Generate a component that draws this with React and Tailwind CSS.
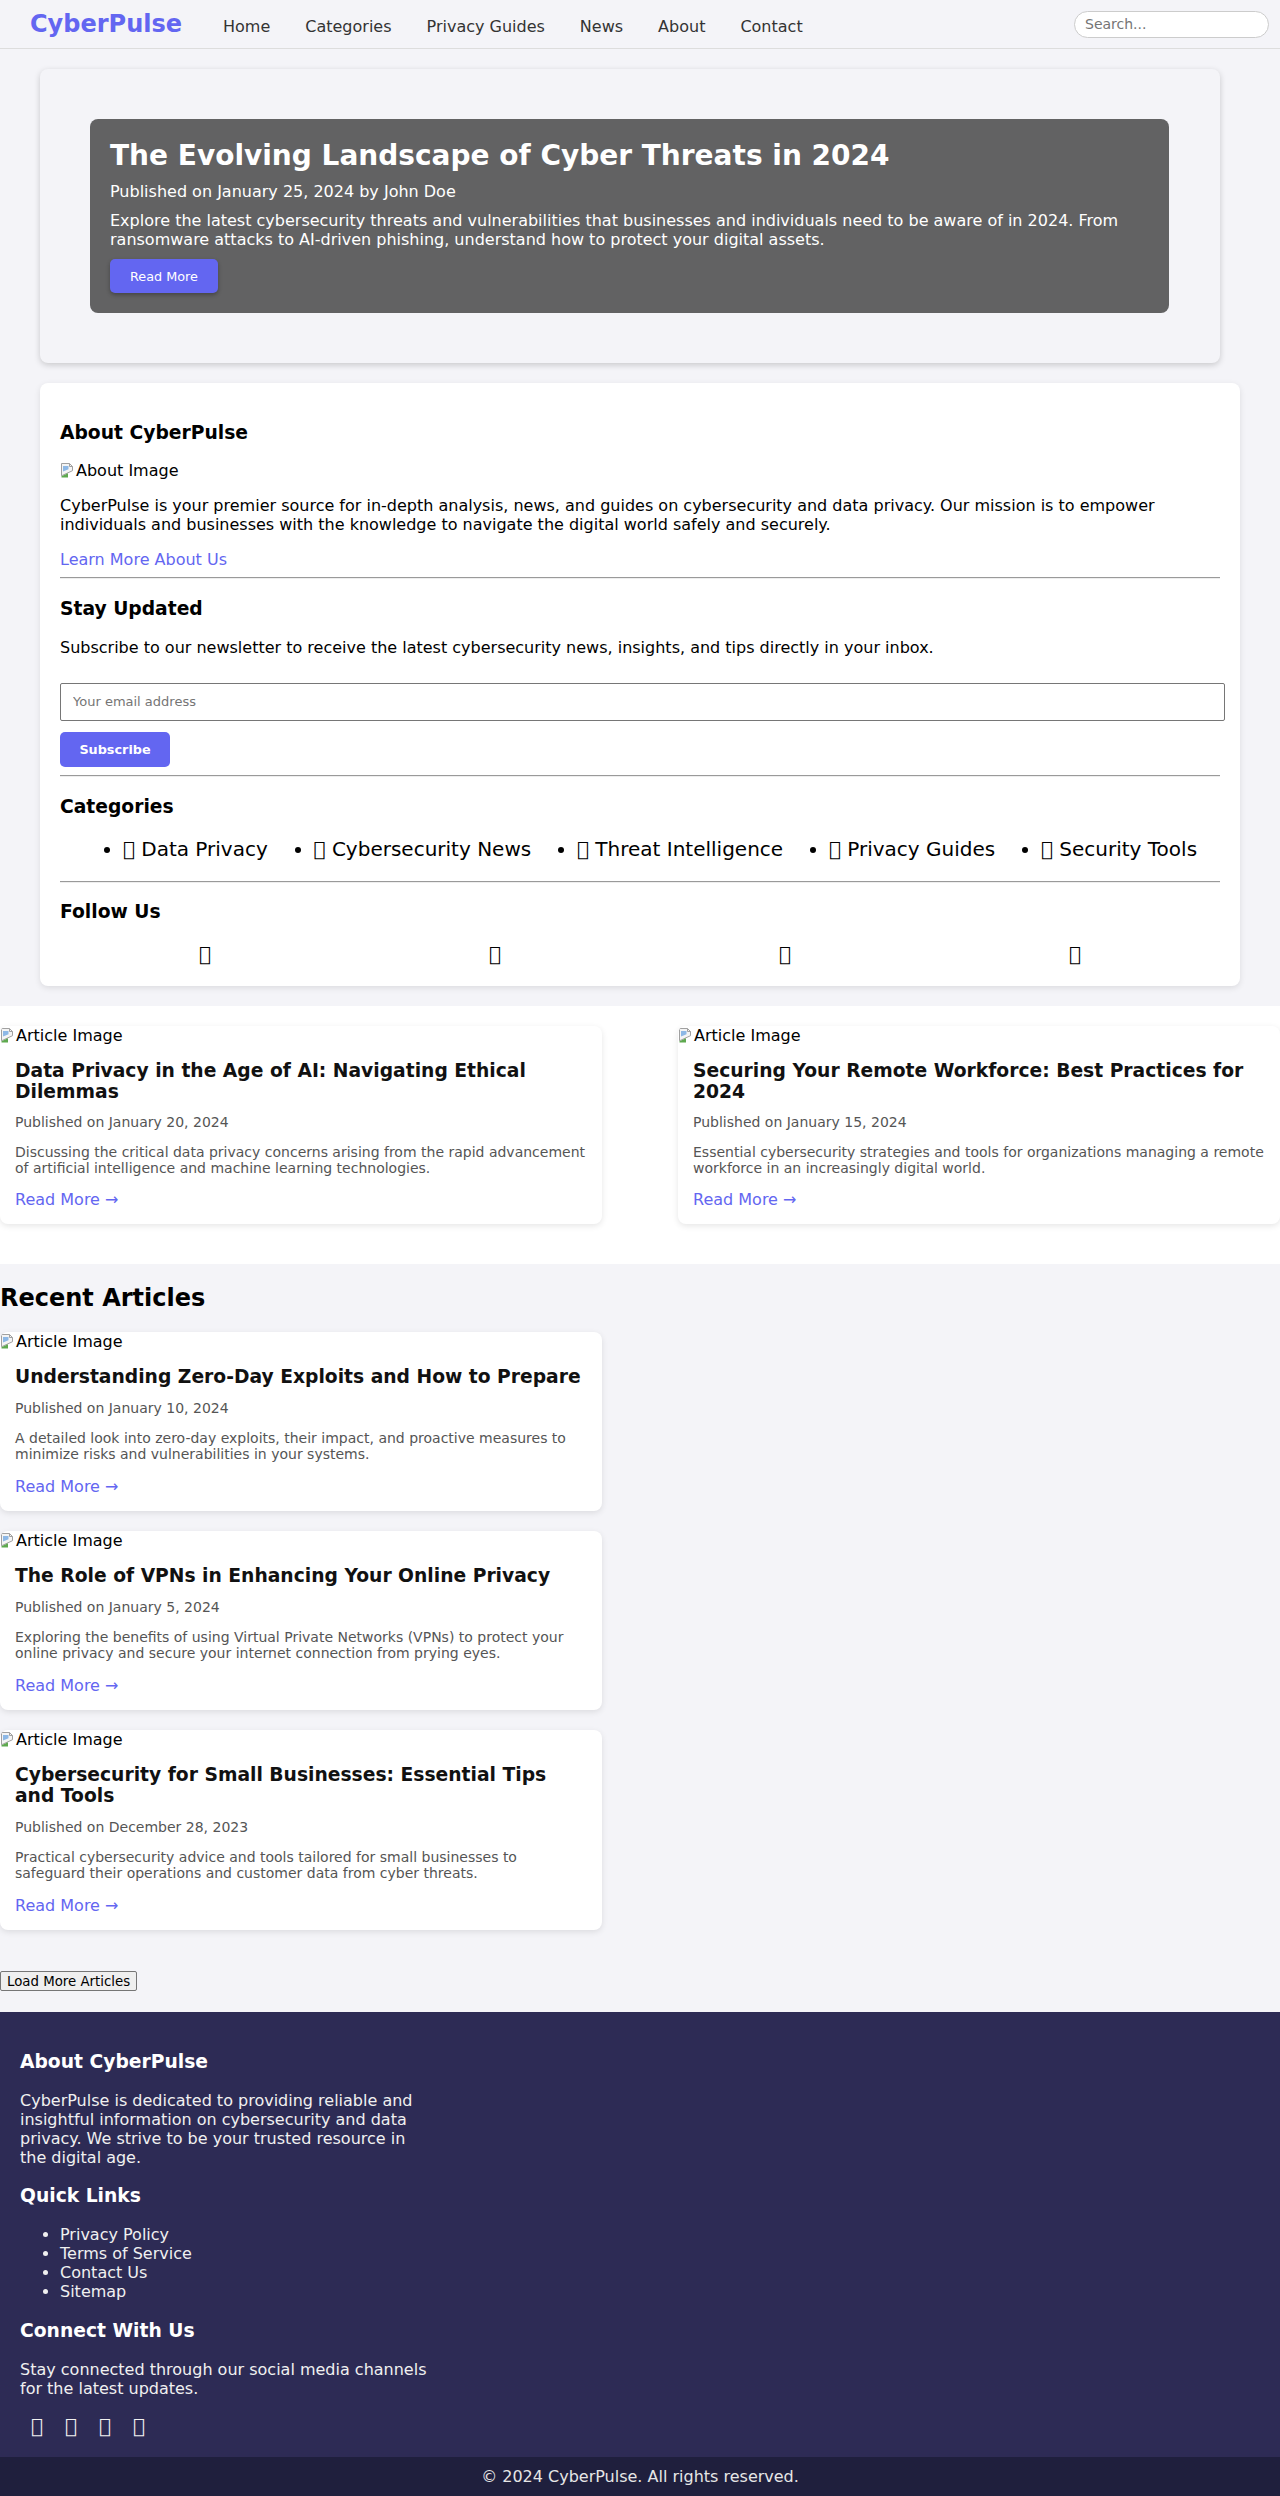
import React from "react";

const ACCENT = "text-[#6366f1]";

function BrokenImg({ alt }) {
  return (
    <span className="inline-flex items-start h-[19px] overflow-hidden align-top">
      <svg width="16" height="16" viewBox="0 0 16 16" className="shrink-0 mt-[1px]">
        <path d="M1.5 1.5h8l3 3v4.2L1.5 13.8z" fill="#f4f4f4" stroke="#a0a0a0" />
        <path d="M3 4h5.5v3.2L3 9.6z" fill="#8db8e6" />
        <path d="M1.5 15.5v-1.2l6.5-3v4.2z" fill="#5ea94f" />
        <path d="M9.5 1.5v3h3" fill="none" stroke="#a0a0a0" />
      </svg>
      <span className="leading-[19px]">{alt}</span>
    </span>
  );
}

function Tofu({ ch }) {
  return <span>{ch}</span>;
}

function ArticleCard({ title, date, desc, recent = false }) {
  return (
    <div className="w-[602px] bg-white rounded-[8px] shadow-[0_2px_6px_rgba(0,0,0,0.1)] overflow-hidden">
      <div className="text-[16px] text-black h-[19px]">
        <BrokenImg alt="Article Image" />
      </div>
      <div className="p-[15px]">
        <h3 className={`text-[18.72px] font-bold leading-[normal] text-[#111] ${recent ? "mb-[13px]" : "mb-[12px]"}`}>{title}</h3>
        <p className="text-[14px] text-[#555] leading-[normal] mb-[14px]">{date}</p>
        <p className={`text-[14px] text-[#555] leading-[normal] ${recent ? "mb-[15px]" : "mb-[14px]"}`}>{desc}</p>
        <a className={`text-[16px] leading-[normal] block ${ACCENT}`}>Read More →</a>
      </div>
    </div>
  );
}

export default function App() {
  return (
    <div className="font-['DejaVu_Sans',sans-serif] leading-[normal] bg-[#f4f4f8] text-black w-[1280px] min-h-[2496px] flex flex-col">
      {/* Header */}
      <header className="h-[49px] border-b border-[#dddddd] bg-[#f4f4f8] flex items-center pl-[30px] pr-[11px]">
        <div className={`text-[24px] font-bold ${ACCENT}`}>CyberPulse</div>
        <nav className="ml-[41px] mt-[4px] flex gap-[35px] text-[16px] text-[#333]">
          <a>Home</a>
          <a>Categories</a>
          <a>Privacy Guides</a>
          <a>News</a>
          <a>About</a>
          <a>Contact</a>
        </nav>
        <input
          className="ml-auto w-[195px] h-[27px] rounded-full border border-[#cccccc] bg-white px-[10px] text-[14px] outline-none placeholder:text-[#757575]"
          placeholder="Search..."
        />
      </header>

      {/* Hero */}
      <section className="mt-[20px] ml-[40px] w-[1180px] bg-[#f4f4f8] rounded-[8px] shadow-[0_2px_6px_rgba(0,0,0,0.18)] pt-[50px] pb-[50px] pl-[50px] pr-[51px]">
        <div className="bg-[rgba(0,0,0,0.6)] rounded-[8px] p-[20px] text-white">
          <h2 className="text-[28px] font-bold leading-[normal] mb-[10px]">
            The Evolving Landscape of Cyber Threats in 2024
          </h2>
          <p className="text-[16px] mb-[10px]">Published on January 25, 2024 by John Doe</p>
          <p className="text-[16px] mb-[10px]">
            Explore the latest cybersecurity threats and vulnerabilities that businesses and individuals need to be aware of in 2024. From ransomware attacks to AI-driven phishing, understand how to protect your digital assets.
          </p>
          <button className="h-[34px] px-[20px] rounded-[5px] bg-[#6366f1] text-white text-[12.8px] shadow-[0_2px_4px_rgba(0,0,0,0.3)]">
            Read More
          </button>
        </div>
      </section>

      {/* About / Newsletter / Categories / Follow */}
      <section className="mt-[20px] ml-[40px] w-[1200px] bg-white rounded-[8px] shadow-[0_2px_6px_rgba(0,0,0,0.1)] p-[20px]">
        <h3 className="text-[18.72px] font-bold my-[18.72px]">About CyberPulse</h3>
        <div className="text-[16px]">
          <BrokenImg alt="About Image" />
        </div>
        <p className="text-[16px] my-[16px]">
          CyberPulse is your premier source for in-depth analysis, news, and guides on cybersecurity and data privacy. Our mission is to empower individuals and businesses with the knowledge to navigate the digital world safely and securely.
        </p>
        <div className="text-[16px] mt-[16px]">
          <a className={ACCENT}>Learn More About Us</a>
        </div>
        <hr className="my-[8px] border-0 border-t border-t-[#9a9a9a] border-b border-b-[#eeeeee]" />
        <h3 className="text-[18.72px] font-bold my-[18.72px]">Stay Updated</h3>
        <p className="text-[16px] my-[16px]">
          Subscribe to our newsletter to receive the latest cybersecurity news, insights, and tips directly in your inbox.
        </p>
        <form className="mt-[26px]" onSubmit={(e) => e.preventDefault()}>
          <input
            className="block w-[calc(100%+5px)] h-[38px] border border-[#767676] rounded-[2px] px-[12px] text-[13px] outline-none placeholder:text-[#757575]"
            placeholder="Your email address"
          />
          <button className="block mt-[11px] h-[35px] w-[110px] rounded-[5px] bg-[#6366f1] text-white font-bold text-[12.8px]">
            Subscribe
          </button>
        </form>
        <hr className="my-[8px] border-0 border-t border-t-[#9a9a9a] border-b border-b-[#eeeeee]" />
        <h3 className="text-[18.72px] font-bold my-[18.72px]">Categories</h3>
        <ul className="flex justify-around list-disc pl-[40px] text-[20px] my-[20px]">
          <li><Tofu ch={"\uf023"} /> Data Privacy</li>
          <li><Tofu ch={"\uf1ea"} /> Cybersecurity News</li>
          <li><Tofu ch={"\uf071"} /> Threat Intelligence</li>
          <li><Tofu ch={"\uf02d"} /> Privacy Guides</li>
          <li><Tofu ch={"\uf0ad"} /> Security Tools</li>
        </ul>
        <hr className="my-[8px] border-0 border-t border-t-[#9a9a9a] border-b border-b-[#eeeeee]" />
        <h3 className="text-[18.72px] font-bold my-[18.72px]">Follow Us</h3>
        <div className="flex justify-around text-[20px] mt-[20px]">
          <a><Tofu ch={"\uf099"} /></a>
          <a><Tofu ch={"\uf09a"} /></a>
          <a><Tofu ch={"\uf0e1"} /></a>
          <a><Tofu ch={"\uf16d"} /></a>
        </div>
      </section>

      {/* Featured */}
      <section className="mt-[20px] bg-white pt-[20px] pb-[40px] flex justify-between">
        <ArticleCard
          title="Data Privacy in the Age of AI: Navigating Ethical Dilemmas"
          date="Published on January 20, 2024"
          desc="Discussing the critical data privacy concerns arising from the rapid advancement of artificial intelligence and machine learning technologies."
        />
        <ArticleCard
          title="Securing Your Remote Workforce: Best Practices for 2024"
          date="Published on January 15, 2024"
          desc="Essential cybersecurity strategies and tools for organizations managing a remote workforce in an increasingly digital world."
        />
      </section>

      {/* Recent */}
      <section className="pt-[20px]">
        <h2 className="text-[24px] font-bold mb-[20px]">Recent Articles</h2>
        <div className="flex flex-col gap-[20px]">
          <ArticleCard
            recent
            title="Understanding Zero-Day Exploits and How to Prepare"
            date="Published on January 10, 2024"
            desc="A detailed look into zero-day exploits, their impact, and proactive measures to minimize risks and vulnerabilities in your systems."
          />
          <ArticleCard
            recent
            title="The Role of VPNs in Enhancing Your Online Privacy"
            date="Published on January 5, 2024"
            desc="Exploring the benefits of using Virtual Private Networks (VPNs) to protect your online privacy and secure your internet connection from prying eyes."
          />
          <ArticleCard
            recent
            title="Cybersecurity for Small Businesses: Essential Tips and Tools"
            date="Published on December 28, 2023"
            desc="Practical cybersecurity advice and tools tailored for small businesses to safeguard their operations and customer data from cyber threats."
          />
        </div>
        <button className="block mt-[41px] mb-[21px] h-[20px] px-[6px] text-[13.33px] leading-[normal] bg-[#efefef] border border-[#767676] rounded-[2px] text-black">
          Load More Articles
        </button>
      </section>

      {/* Footer */}
      <footer className="flex-1 bg-[#2d2b55] text-[#f0f0f0] pt-[20px] px-[20px] pb-[18px]">
        <div className="w-[413px]">
          <h3 className="text-[18.72px] font-bold my-[18.72px] text-white">About CyberPulse</h3>
          <p className="text-[16px] my-[16px]">
            CyberPulse is dedicated to providing reliable and insightful information on cybersecurity and data privacy. We strive to be your trusted resource in the digital age.
          </p>
          <h3 className="text-[18.72px] font-bold my-[18.72px] text-white">Quick Links</h3>
          <ul className="list-disc pl-[40px] text-[16px] my-[16px]">
            <li><a>Privacy Policy</a></li>
            <li><a>Terms of Service</a></li>
            <li><a>Contact Us</a></li>
            <li><a>Sitemap</a></li>
          </ul>
          <h3 className="text-[18.72px] font-bold my-[18.72px] text-white">Connect With Us</h3>
          <p className="text-[16px] my-[16px]">
            Stay connected through our social media channels for the latest updates.
          </p>
          <div className="flex text-[20px] mt-[16px]">
            <a className="w-[34px] text-center"><Tofu ch={"\uf099"} /></a>
            <a className="w-[34px] text-center"><Tofu ch={"\uf09a"} /></a>
            <a className="w-[34px] text-center"><Tofu ch={"\uf0e1"} /></a>
            <a className="w-[34px] text-center"><Tofu ch={"\uf16d"} /></a>
          </div>
        </div>
      </footer>
      <div className="h-[39px] shrink-0 bg-[#1f1f3d] text-[#e6e6e6] text-[16px] flex items-center justify-center">
        © 2024 CyberPulse. All rights reserved.
      </div>
    </div>
  );
}
